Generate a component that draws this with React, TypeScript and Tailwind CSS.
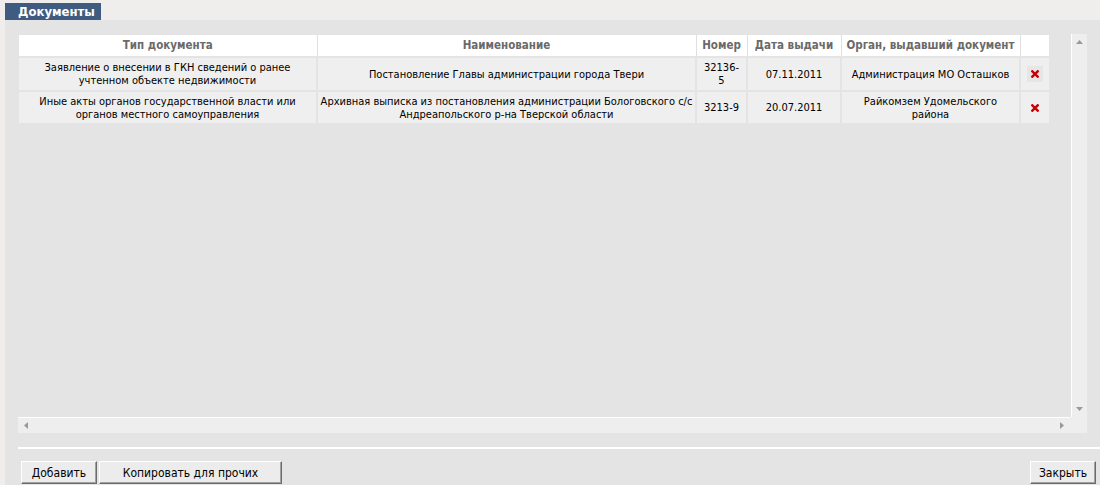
import React from "react";

const rows = [
  {
    type: "Заявление о внесении в ГКН сведений о ранее учтенном объекте недвижимости",
    name: "Постановление Главы администрации города Твери",
    num: "32136-5",
    date: "07.11.2011",
    org: "Администрация МО Осташков",
    hover: true,
  },
  {
    type: "Иные акты органов государственной власти или органов местного самоуправления",
    name: "Архивная выписка из постановления администрации Бологовского с/с Андреапольского р-на Тверской области",
    num: "3213-9",
    date: "20.07.2011",
    org: "Райкомзем Удомельского района",
    hover: false,
  },
];

function XIcon() {
  return (
    <svg width="8" height="8" viewBox="0 0 8 8">
      <path d="M1.3 1.3 L6.7 6.7 M6.7 1.3 L1.3 6.7" stroke="#cc0000" strokeWidth="2.4" strokeLinecap="square" />
    </svg>
  );
}

function Btn({ children, w }: { children: React.ReactNode; w: string }) {
  return (
    <button
      className={`h-[23px] ${w} bg-[#ececec] border border-t-white border-l-white border-r-[#6b6b6b] border-b-[#6b6b6b] shadow-[inset_-1px_-1px_0_#a0a0a0] text-[12px] text-black flex items-center justify-center`}
    >
      {children}
    </button>
  );
}

export default function App() {
  return (
    <div
      className="w-[1100px] h-[485px] bg-[#efeeec] flex flex-col overflow-hidden"
      style={{ fontFamily: '"DejaVu Sans Condensed", "DejaVu Sans", sans-serif' }}
    >
      <div className="ml-[5px] mt-[3px] h-[17px] w-[96px] bg-[#3f5b80] text-white font-bold text-[13px] leading-[17px] pl-[13px]">
        Документы
      </div>
      <div className="ml-[5px] flex-1 bg-[#e4e4e4] pt-[14px] pl-[13px] flex flex-col">
        <div className="w-[1069px] h-[399px] flex">
          <div className="w-[1052px] flex flex-col">
            <div className="h-[383px] pl-[1px] pt-[1px]">
              <table className="w-[1030px] border-collapse table-fixed text-[11px] leading-[13px] text-black">
                <colgroup>
                  <col className="w-[298px]" />
                  <col className="w-[379px]" />
                  <col className="w-[51px]" />
                  <col className="w-[94px]" />
                  <col className="w-[179px]" />
                  <col className="w-[29px]" />
                </colgroup>
                <thead>
                  <tr className="h-[22px] bg-white text-[#6a6a6a] font-bold text-[11.5px]">
                    <th className="border-r border-[#e0e0e0]">Тип документа</th>
                    <th className="border-r border-[#e0e0e0]">Наименование</th>
                    <th className="border-r border-[#e0e0e0]">Номер</th>
                    <th className="border-r border-[#e0e0e0]">Дата выдачи</th>
                    <th className="border-r border-[#e0e0e0]">Орган, выдавший документ</th>
                    <th></th>
                  </tr>
                </thead>
                <tbody>
                  {rows.map((r, i) => (
                    <tr key={i} className={`${i === 0 ? "h-[34px]" : "h-[32px]"} bg-[#efefef] border-t-2 border-[#e4e4e4]`}>
                      <td className="text-center px-[20px] border-r-2 border-[#e4e4e4]">{r.type}</td>
                      <td className="text-center px-[1px] border-r-2 border-[#e4e4e4]">{r.name}</td>
                      <td className="text-center px-[4px] border-r-2 border-[#e4e4e4] break-words">
                        {r.num === "32136-5" ? (
                          <>
                            32136-
                            <br />5
                          </>
                        ) : (
                          r.num
                        )}
                      </td>
                      <td className="text-center border-r-2 border-[#e4e4e4]">{r.date}</td>
                      <td className="text-center px-[4px] border-r-2 border-[#e4e4e4]">
                        {r.org === "Райкомзем Удомельского района" ? (
                          <>
                            Райкомзем Удомельского
                            <br />
                            района
                          </>
                        ) : (
                          r.org
                        )}
                      </td>
                      <td>
                        <div className="flex justify-center">
                          <div className={`w-[16px] h-[16px] flex items-center justify-center ${r.hover ? "bg-[#e6e6e6]" : ""}`}>
                            <XIcon />
                          </div>
                        </div>
                      </td>
                    </tr>
                  ))}
                </tbody>
              </table>
            </div>
            <div className="h-[16px] bg-[#eeeeee] border-t border-white flex items-center justify-between px-[6px]">
              <svg width="4" height="7" viewBox="0 0 4 7"><path d="M4 0 L0 3.5 L4 7Z" fill="#9a9a9a" /></svg>
              <svg width="4" height="7" viewBox="0 0 4 7"><path d="M0 0 L4 3.5 L0 7Z" fill="#9a9a9a" /></svg>
            </div>
          </div>
          <div className="w-[17px] flex flex-col">
            <div className="h-[383px] ml-[1px] border-l border-white bg-[#eeeeee] flex flex-col items-center justify-between py-[6px]">
              <svg width="7" height="4" viewBox="0 0 7 4"><path d="M0 4 L3.5 0 L7 4Z" fill="#9a9a9a" /></svg>
              <svg width="7" height="4" viewBox="0 0 7 4"><path d="M0 0 L3.5 4 L7 0Z" fill="#9a9a9a" /></svg>
            </div>
            <div className="h-[16px] bg-[#eeeeee]" />
          </div>
        </div>
        <div className="mt-[14px] h-[2px] bg-white" />
        <div className="mt-[12px] flex items-start pl-[3px] pr-[4px]">
          <Btn w="w-[76px]">Добавить</Btn>
          <div className="w-[2px]" />
          <Btn w="w-[183px]">Копировать для прочих</Btn>
          <div className="flex-1" />
          <Btn w="w-[66px]">Закрыть</Btn>
        </div>
      </div>
    </div>
  );
}
